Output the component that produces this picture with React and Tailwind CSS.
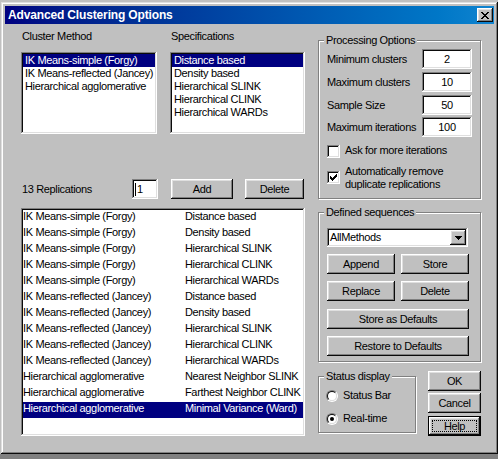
import React from "react";

const SUNKEN =
  "shadow-[inset_-1px_-1px_0_#ffffff,inset_1px_1px_0_#808080,inset_-2px_-2px_0_#dfdfdf,inset_2px_2px_0_#0a0a0a]";
const RAISED =
  "shadow-[inset_-1px_-1px_0_#0a0a0a,inset_1px_1px_0_#ffffff,inset_-2px_-2px_0_#808080,inset_2px_2px_0_#dfdfdf]";
const GROUP =
  "relative border border-[#808080] shadow-[inset_1px_1px_0_#ffffff,1px_1px_0_#ffffff]";

function Btn({ children, className = "" }) {
  return (
    <div
      className={`h-[20px] bg-[#c0c0c0] ${RAISED} flex items-center justify-center ${className}`}
    >
      {children}
    </div>
  );
}

function Group({ label, className = "", children }) {
  return (
    <div className={`${GROUP} ${className}`}>
      <div className="absolute left-[5px] top-[-7px] px-[2px] bg-[#c0c0c0] leading-[13px] whitespace-nowrap">
        {label}
      </div>
      {children}
    </div>
  );
}

function Field({ value }) {
  return (
    <div
      className={`w-[50px] h-[20px] bg-white ${SUNKEN} flex items-center justify-center`}
    >
      {value}
    </div>
  );
}

function CheckBox({ checked }) {
  return (
    <div className={`w-[13px] h-[13px] shrink-0 bg-white ${SUNKEN} flex items-center justify-center`}>
      {checked && (
        <svg width="7" height="7" viewBox="0 0 7 7" shapeRendering="crispEdges">
          <path
            fill="#000"
            d="M6 0h1v1H6z M5 1h2v1H5z M0 2h1v1H0z M4 2h3v1H4z M0 3h2v1H0z M3 3h3v1H3z M0 4h5v1H0z M1 5h3v1H1z M2 6h1v1H2z"
          />
        </svg>
      )}
    </div>
  );
}

function Radio({ checked }) {
  return (
    <div className="w-[12px] h-[12px] shrink-0 rounded-full border border-t-[#808080] border-l-[#808080] border-r-white border-b-white">
      <div className="w-full h-full rounded-full border border-t-[#0a0a0a] border-l-[#0a0a0a] border-r-[#dfdfdf] border-b-[#dfdfdf] bg-white flex items-center justify-center">
        {checked && <div className="w-[4px] h-[4px] rounded-full bg-black" />}
      </div>
    </div>
  );
}

const methods = [
  "IK Means-simple (Forgy)",
  "IK Means-reflected (Jancey)",
  "Hierarchical agglomerative",
];
const specs = [
  "Distance based",
  "Density based",
  "Hierarchical SLINK",
  "Hierarchical CLINK",
  "Hierarchical WARDs",
];

const seq = [
  ["IK Means-simple (Forgy)", "Distance based"],
  ["IK Means-simple (Forgy)", "Density based"],
  ["IK Means-simple (Forgy)", "Hierarchical SLINK"],
  ["IK Means-simple (Forgy)", "Hierarchical CLINK"],
  ["IK Means-simple (Forgy)", "Hierarchical WARDs"],
  ["IK Means-reflected (Jancey)", "Distance based"],
  ["IK Means-reflected (Jancey)", "Density based"],
  ["IK Means-reflected (Jancey)", "Hierarchical SLINK"],
  ["IK Means-reflected (Jancey)", "Hierarchical CLINK"],
  ["IK Means-reflected (Jancey)", "Hierarchical WARDs"],
  ["Hierarchical agglomerative", "Nearest Neighbor SLINK"],
  ["Hierarchical agglomerative", "Farthest Neighbor CLINK"],
  ["Hierarchical agglomerative", "Minimal Variance (Ward)"],
];

function SmallList({ items, width, selected }) {
  return (
    <div className={`h-[82px] bg-white ${SUNKEN} p-[2px] overflow-hidden`} style={{ width }}>
      {items.map((t, i) => (
        <div
          key={i}
          className={`h-[13px] leading-[13px] pl-[2px] whitespace-nowrap overflow-hidden ${
            i === selected ? "bg-[#000080] text-white" : ""
          }`}
        >
          {t}
        </div>
      ))}
    </div>
  );
}

export default function App() {
  return (
    <div className="w-[498px] h-[459px] bg-[#c0c0c0] overflow-hidden flex flex-col font-['Liberation_Sans',Arial,sans-serif] text-[11px] leading-[13px] tracking-[-0.35px] text-black">
      <div
        className={`ml-[1px] mt-[2px] w-[497px] h-[452px] shrink-0 bg-[#c0c0c0] p-[4px] flex flex-col shadow-[inset_-1px_-1px_0_#0a0a0a,inset_1px_1px_0_#dfdfdf,inset_-2px_-2px_0_#808080,inset_2px_2px_0_#ffffff]`}
      >
        {/* Title bar */}
        <div className="h-[18px] shrink-0 flex items-center justify-between pl-[3px] pr-[1px] bg-linear-to-r from-[#000080] to-[#1084d0]">
          <span className="text-white font-bold text-[12px] tracking-[-0.15px] leading-[13px] pt-[1px]">
            Advanced Clustering Options
          </span>
          <div className={`w-[16px] h-[14px] bg-[#c0c0c0] ${RAISED} flex items-center justify-center pt-[1px]`}>
            <svg width="8" height="7" viewBox="0 0 8 7" shapeRendering="crispEdges">
              <path
                fill="#000"
                d="M0 0h2v1H0z M6 0h2v1H6z M1 1h2v1H1z M5 1h2v1H5z M2 2h4v1H2z M3 3h2v1H3z M2 4h4v1H2z M1 5h2v1H1z M5 5h2v1H5z M0 6h2v1H0z M6 6h2v1H6z"
              />
            </svg>
          </div>
        </div>

        {/* Content */}
        <div className="flex flex-1">
          {/* Left column */}
          <div className="ml-[16px] w-[284px] pt-[6px] flex flex-col">
            <div className="flex gap-[13px]">
              <div className="flex flex-col">
                <div className="h-[13px] pl-[1px]">Cluster Method</div>
                <div className="mt-[9px]">
                  <SmallList items={methods} width={136} selected={0} />
                </div>
              </div>
              <div className="flex flex-col">
                <div className="h-[13px] pl-[1px]">Specifications</div>
                <div className="mt-[9px]">
                  <SmallList items={specs} width={135} selected={0} />
                </div>
              </div>
            </div>

            {/* Replications row */}
            <div className="mt-[45px] h-[20px] flex items-center">
              <div className="w-[111px] pl-[1px]">13 Replications</div>
              <div className={`w-[26px] h-[20px] bg-white ${SUNKEN} flex items-center pl-[3px]`}>
                <div className="w-[1px] h-[13px] bg-black mr-[1px]" />
                <span>1</span>
              </div>
              <Btn className="ml-[13px] w-[62px]">Add</Btn>
              <Btn className="ml-[12px] w-[59px]">Delete</Btn>
            </div>

            {/* Big list */}
            <div className={`mt-[9px] h-[228px] bg-white ${SUNKEN} p-[2px] overflow-hidden`}>
              {seq.map(([a, b], i) => (
                <div
                  key={i}
                  className={`h-[16px] leading-[13px] flex whitespace-nowrap ${
                    i === seq.length - 1 ? "bg-[#000080] text-white" : ""
                  }`}
                >
                  <div className="w-[162px] overflow-hidden">{a}</div>
                  <div className="flex-1 overflow-hidden">{b}</div>
                </div>
              ))}
            </div>
          </div>

          {/* Right column */}
          <div className="ml-[13px] w-[163px] pt-[16px] flex flex-col">
            <Group label="Processing Options" className="h-[159px] pt-[8px] pl-[8px] pr-[8px]">
              <div className="h-[20px] flex items-center justify-between">
                <span>Minimum clusters</span>
                <Field value="2" />
              </div>
              <div className="mt-[3px] h-[20px] flex items-center justify-between">
                <span>Maximum clusters</span>
                <Field value="10" />
              </div>
              <div className="mt-[3px] h-[20px] flex items-center justify-between">
                <span>Sample Size</span>
                <Field value="50" />
              </div>
              <div className="mt-[2px] h-[20px] flex items-center justify-between">
                <span>Maximum iterations</span>
                <Field value="100" />
              </div>
              <div className="mt-[7px] flex items-start gap-[5px]">
                <div className="mt-[1px]">
                  <CheckBox checked={false} />
                </div>
                <span>Ask for more iterations</span>
              </div>
              <div className="mt-[7px] flex items-center gap-[5px]">
                <CheckBox checked={true} />
                <span className="leading-[12.5px]">
                  Automatically remove
                  <br />
                  duplicate replications
                </span>
              </div>
            </Group>

            <Group label="Defined sequences" className="mt-[13px] h-[150px] pt-[15px] pl-[8px]">
              <div className={`w-[141px] h-[19px] bg-white ${SUNKEN} p-[2px] flex items-center`}>
                <span className="flex-1 pl-[1px]">AllMethods</span>
                <div className={`w-[16px] h-[15px] bg-[#c0c0c0] ${RAISED} flex items-center justify-center`}>
                  <svg width="7" height="4" viewBox="0 0 7 4" shapeRendering="crispEdges">
                    <path fill="#000" d="M0 0h7v1H0z M1 1h5v1H1z M2 2h3v1H2z M3 3h1v1H3z" />
                  </svg>
                </div>
              </div>
              <div className="mt-[7px] flex gap-[6px]">
                <Btn className="w-[68px]">Append</Btn>
                <Btn className="w-[68px]">Store</Btn>
              </div>
              <div className="mt-[7px] flex gap-[6px]">
                <Btn className="w-[68px]">Replace</Btn>
                <Btn className="w-[68px]">Delete</Btn>
              </div>
              <Btn className="mt-[8px] w-[142px]">Store as Defaults</Btn>
              <Btn className="mt-[7px] w-[142px]">Restore to Defaults</Btn>
            </Group>

            <div className="mt-[9px] flex items-start">
              <Group label="Status display" className="mt-[5px] w-[98px] h-[57px] pt-[12px] pl-[7px]">
                <div className="h-[13px] flex items-center gap-[5px]">
                  <Radio checked={false} />
                  <span>Status Bar</span>
                </div>
                <div className="mt-[10px] h-[13px] flex items-center gap-[5px]">
                  <Radio checked={true} />
                  <span>Real-time</span>
                </div>
              </Group>
              <div className="ml-[12px] w-[53px] flex flex-col">
                <Btn className="w-[53px]">OK</Btn>
                <Btn className="mt-[2px] w-[53px]">Cancel</Btn>
                <div className={`mt-[3px] w-[53px] h-[20px] border border-black bg-[#c0c0c0] ${RAISED} flex items-center justify-center`}>
                  <span className="w-[45px] h-[12px] border border-dotted border-black flex items-center justify-center leading-[11px]">
                    Help
                  </span>
                </div>
              </div>
            </div>
          </div>
        </div>
      </div>
      <div className="flex-1 bg-[#808080]" />
    </div>
  );
}
